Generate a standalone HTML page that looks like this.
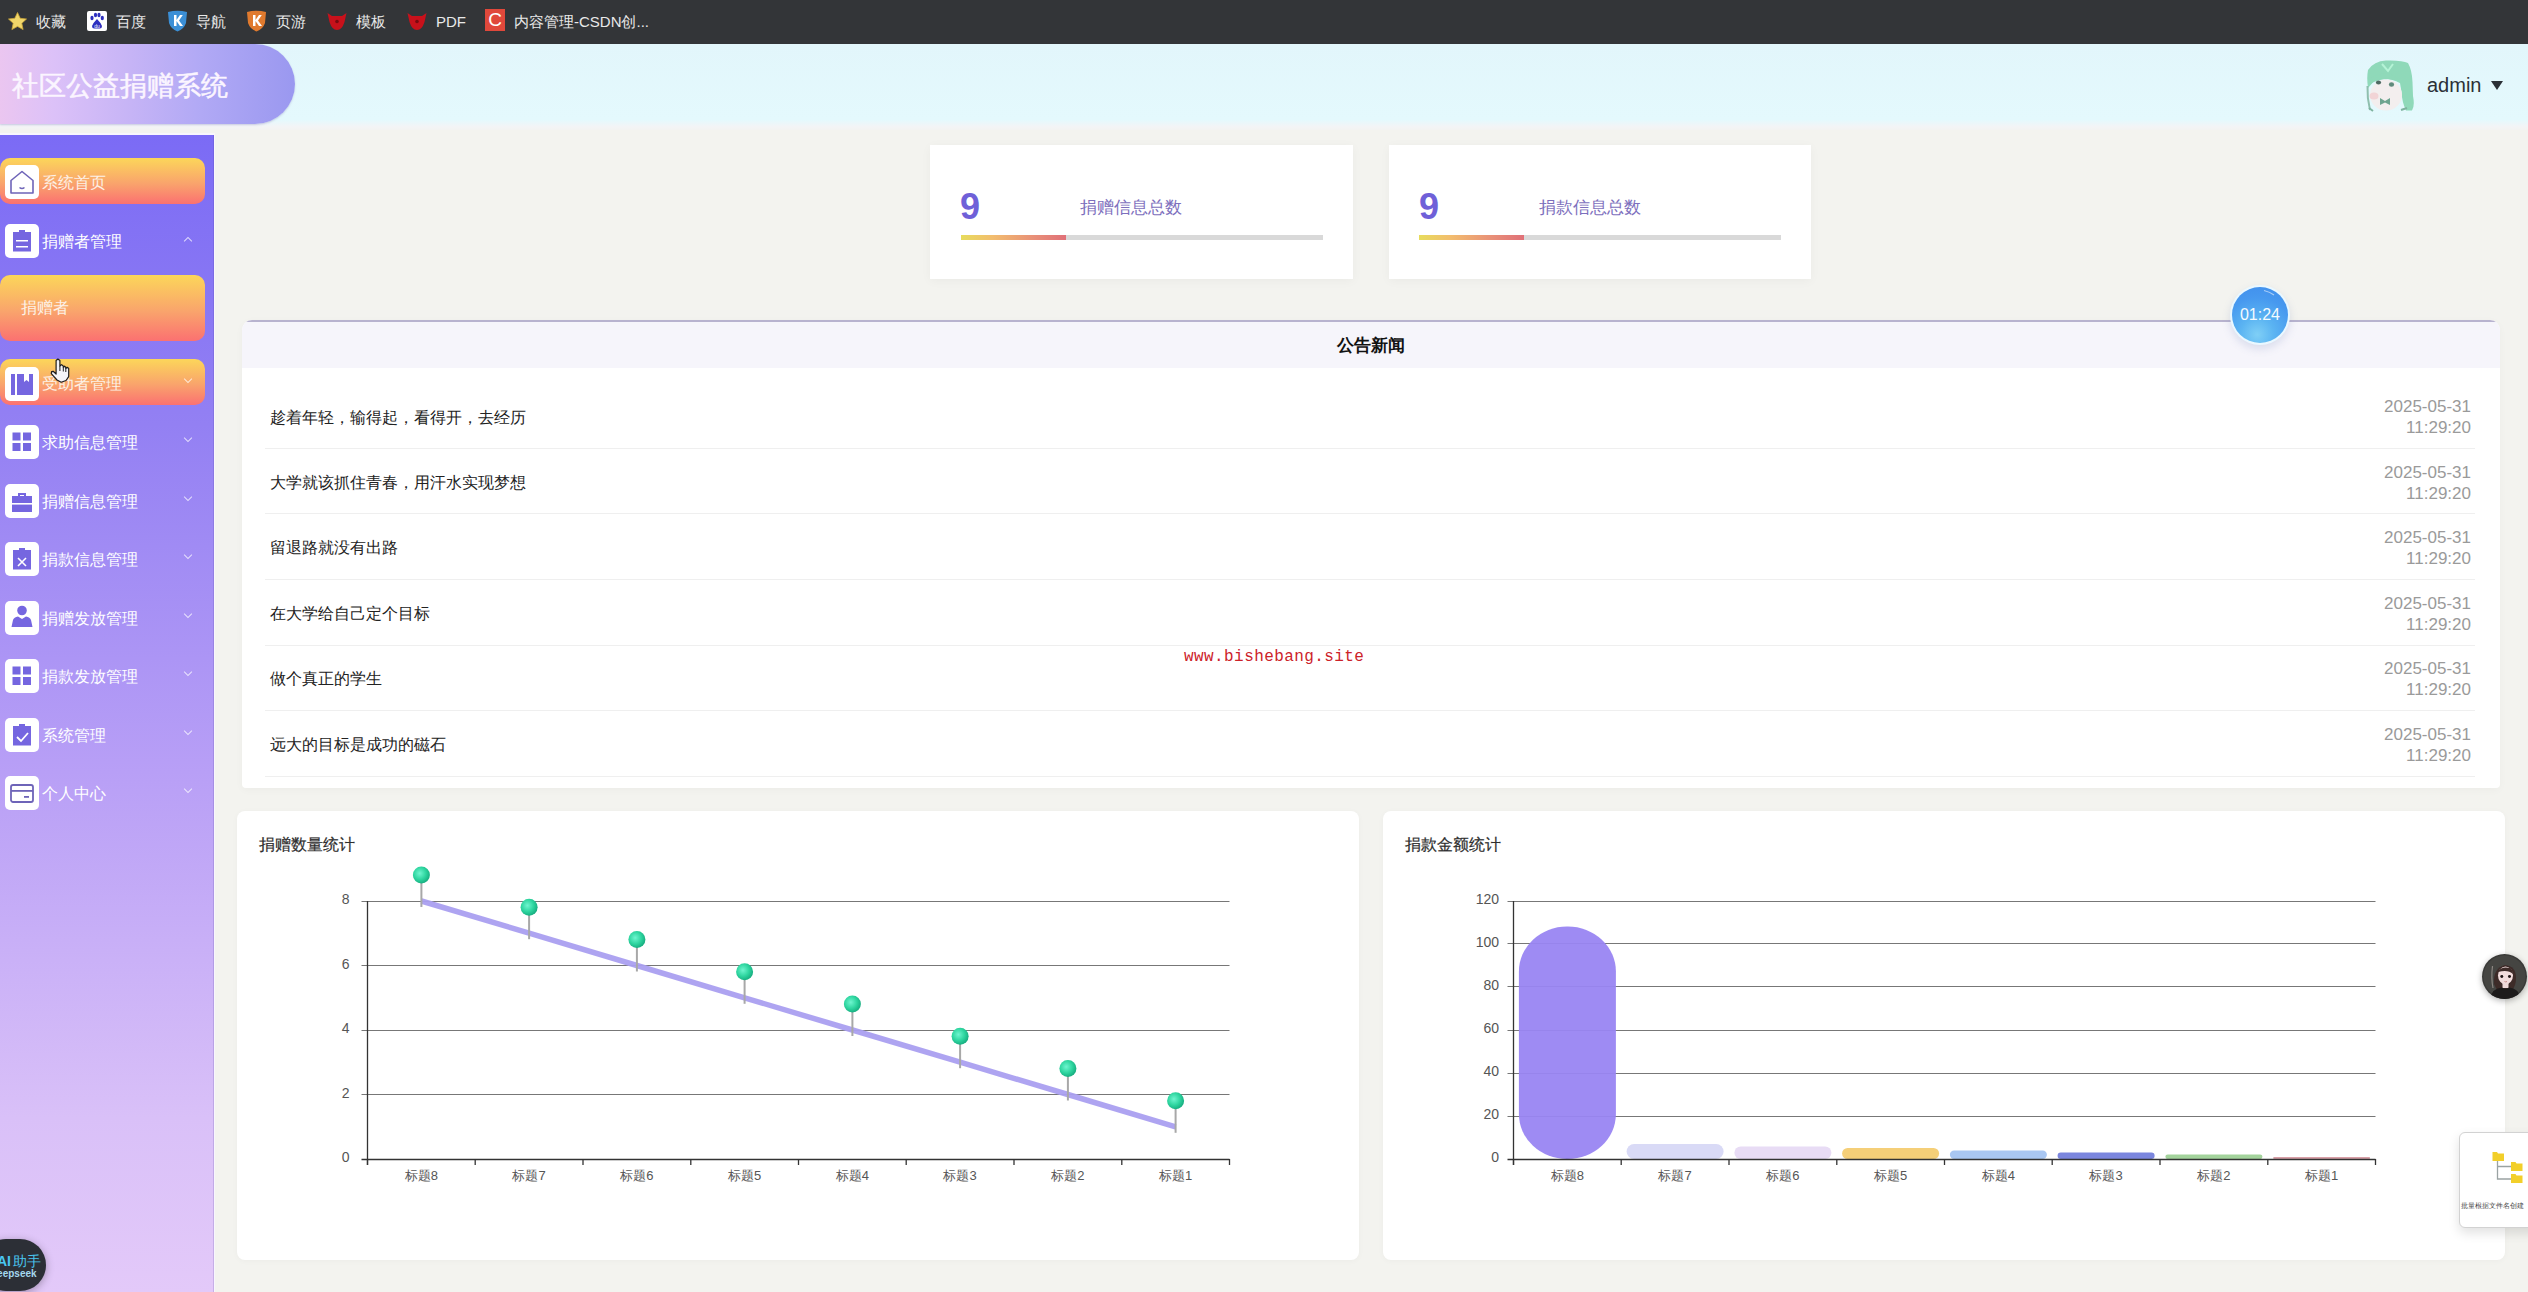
<!DOCTYPE html>
<html><head><meta charset="utf-8">
<style>
*{box-sizing:border-box;margin:0;padding:0}
html,body{width:2528px;height:1292px;overflow:hidden}
body{position:relative;background:#f3f3ef;font-family:"Liberation Sans",sans-serif;color:#333}
.abs{position:absolute}
/* bookmark bar */
#bm{left:0;top:0;width:2528px;height:44px;background:#333538}
.bmi{position:absolute;top:1px;height:44px;line-height:42px;font-size:15px;color:#e9e9e9;white-space:nowrap}
/* header */
#hd{left:0;top:44px;width:2528px;height:86px;background:linear-gradient(180deg,#e2f6fb 0%,#e4f9fd 88%,#f3f4f6 96%,#f3f3f1 100%)}
#logo{left:0;top:44px;width:295px;height:80px;border-radius:0 40px 40px 0;background:linear-gradient(90deg,#ebc6f0 0%,#dcc1f8 18%,#c8b5f6 42%,#b1a9f5 68%,#9a98f0 100%);box-shadow:0 1px 2px rgba(90,70,150,.25)}
#logo span{position:absolute;left:12px;top:24px;font-size:27px;color:#fbf5ff;-webkit-text-stroke:0.5px #fbf5ff;letter-spacing:0px;line-height:36px}
/* sidebar */
#sb{left:0;top:133px;width:215px;height:1159px;border-top:2px solid #f8f6fd;box-shadow:inset -1px 0 0 rgba(80,60,150,.18);background:linear-gradient(180deg,#7b6bf5 0%,#9380f3 25%,#b89ff6 55%,#d9c0f8 85%,#e3c9f9 100%);border-right:1px solid #f8f5fe}
.mi{position:absolute;left:0;width:205px;height:46px}
.mi.act{background:linear-gradient(180deg,#fcd65a 0%,#f9a46c 55%,#fb7171 100%);border-radius:10px}
.ico{position:absolute;left:5px;width:34px;height:34px;background:#fff;border-radius:5px}
.mt{position:absolute;left:42px;font-size:16px;color:#fff;line-height:20px;white-space:nowrap}
.chev{position:absolute;left:184.8px;width:6px;height:6px;border-right:1.7px solid rgba(255,255,255,.72);border-bottom:1.7px solid rgba(255,255,255,.72);transform:rotate(45deg)}

.card{position:absolute;background:#fff;box-shadow:0 2px 10px rgba(0,0,0,.04)}
.num{position:absolute;font-size:36px;font-weight:bold;color:#6f60d8;line-height:40px}
.clab{position:absolute;font-size:17px;color:#7d6fbd;line-height:20px;white-space:nowrap}
.bar{position:absolute;height:5px;background:#d9d9d9}
.bar i{position:absolute;left:0;top:0;height:5px;width:105px;background:linear-gradient(90deg,#e7dc5c 0%,#f2bd6e 30%,#e88f78 70%,#e07078 100%)}
#np{left:242px;top:320px;width:2258px;height:468px;box-shadow:0 2px 8px rgba(0,0,0,.03);background:#fff;border-radius:10px 10px 4px 4px;overflow:hidden}
#npb{position:absolute;left:0;top:0;width:100%;height:2px;background:#b8b3cf}
#nph{position:absolute;left:0;top:2px;width:100%;height:46px;background:#f6f5fb}
.nt{position:absolute;left:28px;font-size:16px;color:#222;line-height:22px;white-space:nowrap}
.nd{position:absolute;right:29px;font-size:17px;color:#9a9a9a;line-height:21px;text-align:right;white-space:nowrap}
.sep{position:absolute;left:23px;width:2210px;height:1px;background:#efefef}
.ccard{position:absolute;top:811px;width:1122px;height:449px;background:#fff;border-radius:8px;box-shadow:0 1px 6px rgba(0,0,0,.03)}
.ctitle{position:absolute;left:22px;top:24px;font-size:16px;font-weight:500;color:#2e2e2e;line-height:20px;-webkit-text-stroke:0.2px #2e2e2e}
</style></head>
<body>
<div id="bm" class="abs">
  
<svg class="abs" style="left:7px;top:11px" width="21" height="21" viewBox="0 0 21 21"><path d="M10.5 1.5 L13.2 7.3 L19.5 8 L14.8 12.3 L16.1 18.6 L10.5 15.4 L4.9 18.6 L6.2 12.3 L1.5 8 L7.8 7.3 Z" fill="#f0d66a" stroke="#c9a437" stroke-width=".8"/></svg>
<div class="abs" style="left:87px;top:11px;width:20px;height:20px;background:#fff;border-radius:2px">
<svg width="20" height="20" viewBox="0 0 20 20"><ellipse cx="5" cy="7" rx="1.6" ry="2.2" fill="#2d2fbf"/><ellipse cx="8.5" cy="4" rx="1.6" ry="2.2" fill="#2d2fbf"/><ellipse cx="12" cy="4" rx="1.6" ry="2.2" fill="#2d2fbf"/><ellipse cx="15.3" cy="7" rx="1.6" ry="2.2" fill="#2d2fbf"/><path d="M10 8 Q6 12 5 15 Q5 18 8 17.5 L12 17.5 Q15 18 15 15 Q14 12 10 8 Z" fill="#2d2fbf"/><text x="10" y="16.5" font-size="5" fill="#fff" text-anchor="middle" font-family="Liberation Sans">du</text></svg></div>
<svg class="abs" style="left:167px;top:10px" width="21" height="22" viewBox="0 0 21 22"><path d="M1 2 Q10.5 -0.5 20 2 L19 13 Q17 19 10.5 21.5 Q4 19 2 13 Z" fill="#3b8fd6"/><path d="M7 5 L9.5 5 L9.5 10 L13 5 L15.8 5 L12 10.5 L16 16 L13 16 L9.5 11 L9.5 16 L7 16 Z" fill="#fff"/></svg>
<svg class="abs" style="left:246px;top:10px" width="21" height="22" viewBox="0 0 21 22"><path d="M1 2 Q10.5 -0.5 20 2 L19 13 Q17 19 10.5 21.5 Q4 19 2 13 Z" fill="#e07a2e"/><path d="M7 5 L9.5 5 L9.5 10 L13 5 L15.8 5 L12 10.5 L16 16 L13 16 L9.5 11 L9.5 16 L7 16 Z" fill="#fff"/></svg>
<svg class="abs" style="left:327px;top:12px" width="20" height="19" viewBox="0 0 20 19"><path d="M0.5 1 L5 4 L15 4 L19.5 1 L17.5 10 Q15 18 10 18 Q5 18 2.5 10 Z" fill="#c8111b"/><circle cx="10" cy="9.5" r="1.8" fill="#7a0a10"/></svg>
<svg class="abs" style="left:407px;top:12px" width="20" height="19" viewBox="0 0 20 19"><path d="M0.5 1 L5 4 L15 4 L19.5 1 L17.5 10 Q15 18 10 18 Q5 18 2.5 10 Z" fill="#c8111b"/><circle cx="10" cy="9.5" r="1.8" fill="#7a0a10"/></svg>
<div class="abs" style="left:485px;top:9px;width:20px;height:22px;background:#e0483b;color:#fff;font-size:19px;line-height:22px;text-align:center;font-family:'Liberation Sans',sans-serif">C</div>
<div class="bmi" style="left:36px">收藏</div>
  <div class="bmi" style="left:116px">百度</div>
  <div class="bmi" style="left:196px">导航</div>
  <div class="bmi" style="left:276px">页游</div>
  <div class="bmi" style="left:356px">模板</div>
  <div class="bmi" style="left:436px">PDF</div>
  <div class="bmi" style="left:514px">内容管理-CSDN创...</div>
</div>
<div id="hd" class="abs"></div>
<div id="logo" class="abs"><span>社区公益捐赠系统</span></div>
<svg class="abs" style="left:2355px;top:52px;filter:blur(0.4px)" width="70" height="70" viewBox="0 0 70 70">
<path d="M13 18 Q19 9 31 8.5 Q47 8 53 11 Q57 18 57.5 30 L58 44 Q60 54 57 58.5 L51 58.5 Q47 50 46.5 40 L45 31 Q34 25 20 28 L13 36 Q11.5 26 13 18 Z" fill="#8fd9b9"/>
<path d="M27 12 L33 19 L38 12" stroke="#b5f3d6" stroke-width="2" fill="none"/>
<ellipse cx="31" cy="43" rx="16" ry="15.5" fill="#f3eeee"/>
<path d="M15 26 Q24 21 33 22 Q41 23 45 31 Q40 27 33 27 Q24 27 15 32 Z" fill="#8fd9b9"/>
<path d="M12.5 34 Q12 46 15 58" stroke="#8fbfae" stroke-width="2" fill="none"/>
<ellipse cx="23.5" cy="30.5" rx="2.6" ry="2" fill="#4f6a62"/>
<ellipse cx="36.5" cy="32.5" rx="2.6" ry="2.2" fill="#5f8b7c"/>
<ellipse cx="19" cy="44" rx="4.5" ry="3.5" fill="#f2d4d6"/>
<path d="M25 46 L30 49 L35 46 L35 53 L30 50.5 L25 53 Z" fill="#6ea48f"/>
<path d="M14 56 L18 59 M46 58 L52 56" stroke="#7fb3a0" stroke-width="2"/>
</svg>
<div class="abs" style="left:2427px;top:74px;font-size:20px;color:#2b3036">admin</div>
<div class="abs" style="left:2491px;top:81px;width:0;height:0;border-left:6px solid transparent;border-right:6px solid transparent;border-top:9px solid #2b3036"></div>

<div id="sb" class="abs"></div>
<div class="mi act" style="top:158px"><div class="ico" style="top:7px"><svg width="34" height="34" viewBox="0 0 34 34"><path d="M17 6.5 L28 15.5 L28 28 L6 28 L6 15.5 Z" fill="none" stroke="#6e64b8" stroke-width="1.6" stroke-linejoin="round"/><path d="M14.5 22.5 Q17 24.5 19.5 22.5" fill="none" stroke="#6e64b8" stroke-width="1.6"/></svg></div><div class="mt" style="top:15px;color:#fdf1e6">系统首页</div></div>
<div class="mi" style="top:218px"><div class="ico" style="top:6px"><svg width="34" height="34" viewBox="0 0 34 34"><rect x="8" y="8" width="18" height="19.5" fill="#7566e0"/><rect x="14" y="6" width="6" height="3" fill="#7566e0"/><rect x="11" y="16" width="12" height="1.5" fill="#fff"/><rect x="11" y="22" width="12" height="1.5" fill="#fff"/></svg></div><div class="mt" style="top:14px">捐赠者管理</div><div class="chev" style="top:20px;transform:rotate(-135deg)"></div></div>
<div class="mi act" style="top:275px;height:66px"><div class="mt" style="left:21px;top:23px;color:#fdf1e6">捐赠者</div></div>
<div class="mi act" style="top:359px"><div class="ico" style="top:8px"><svg width="34" height="34" viewBox="0 0 34 34"><rect x="6" y="7" width="4" height="21" fill="#7566e0"/><path d="M12 7 L28 7 L28 28 L12 28 Z M19 7 L19 15 L21.5 13 L24 15 L24 7 Z" fill="#7566e0" fill-rule="evenodd"/></svg></div><div class="mt" style="top:15px;color:#fdf1e6">受助者管理</div><div class="chev" style="top:17px"></div></div>
<div class="mi" style="top:418px"><div class="ico" style="top:7px"><svg width="34" height="34" viewBox="0 0 34 34"><rect x="7.5" y="7.5" width="8" height="8" fill="#7566e0"/><rect x="18" y="7.5" width="8" height="8" fill="#7566e0"/><rect x="7.5" y="18" width="8" height="8" fill="#7566e0"/><rect x="18" y="18" width="8" height="8" fill="#7566e0"/></svg></div><div class="mt" style="top:15px">求助信息管理</div><div class="chev" style="top:17px"></div></div>
<div class="mi" style="top:477px"><div class="ico" style="top:7px"><svg width="34" height="34" viewBox="0 0 34 34"><path d="M13 9 L21 9 L21 12 L19 12 L19 11 L15 11 L15 12 L13 12 Z" fill="#7566e0"/><rect x="7" y="12" width="20" height="16" fill="#7566e0"/><rect x="7" y="19" width="20" height="1.6" fill="#fff"/></svg></div><div class="mt" style="top:15px">捐赠信息管理</div><div class="chev" style="top:17px"></div></div>
<div class="mi" style="top:535px"><div class="ico" style="top:7px"><svg width="34" height="34" viewBox="0 0 34 34"><rect x="8" y="8" width="18" height="19.5" fill="#7566e0"/><rect x="14" y="6" width="6" height="3" fill="#7566e0"/><path d="M13 16 L21 24 M21 16 L13 24" stroke="#fff" stroke-width="1.6"/></svg></div><div class="mt" style="top:15px">捐款信息管理</div><div class="chev" style="top:17px"></div></div>
<div class="mi" style="top:594px"><div class="ico" style="top:7px"><svg width="34" height="34" viewBox="0 0 34 34"><circle cx="17" cy="9.5" r="4.8" fill="#7566e0"/><path d="M6.5 26 L8 19 Q9 16 13 15.5 L17 18 L21 15.5 Q25 16 26 19 L27.5 26 Z" fill="#7566e0"/></svg></div><div class="mt" style="top:15px">捐赠发放管理</div><div class="chev" style="top:17px"></div></div>
<div class="mi" style="top:652px"><div class="ico" style="top:7px"><svg width="34" height="34" viewBox="0 0 34 34"><rect x="7.5" y="7.5" width="8" height="8" fill="#7566e0"/><rect x="18" y="7.5" width="8" height="8" fill="#7566e0"/><rect x="7.5" y="18" width="8" height="8" fill="#7566e0"/><rect x="18" y="18" width="8" height="8" fill="#7566e0"/></svg></div><div class="mt" style="top:15px">捐款发放管理</div><div class="chev" style="top:17px"></div></div>
<div class="mi" style="top:711px"><div class="ico" style="top:7px"><svg width="34" height="34" viewBox="0 0 34 34"><rect x="8" y="8" width="18" height="19.5" fill="#7566e0"/><rect x="14" y="6" width="6" height="3" fill="#7566e0"/><path d="M12 19 L16 23 L23 15" fill="none" stroke="#fff" stroke-width="1.8"/></svg></div><div class="mt" style="top:15px">系统管理</div><div class="chev" style="top:17px"></div></div>
<div class="mi" style="top:769px"><div class="ico" style="top:7px"><svg width="34" height="34" viewBox="0 0 34 34"><rect x="6" y="9" width="22" height="17" rx="2" fill="none" stroke="#6e64b8" stroke-width="1.8"/><rect x="6" y="14" width="22" height="1.8" fill="#6e64b8"/><rect x="19" y="20" width="5" height="1.8" fill="#6e64b8"/></svg></div><div class="mt" style="top:15px">个人中心</div><div class="chev" style="top:17px"></div></div>


<!-- MAIN -->
<div class="card" style="left:930px;top:145px;width:423px;height:134px">
  <div class="num" style="left:30px;top:42px">9</div>
  <div class="clab" style="left:150px;top:53px">捐赠信息总数</div>
  <div class="bar" style="left:31px;top:90px;width:362px"><i></i></div>
</div>
<div class="card" style="left:1389px;top:145px;width:422px;height:134px">
  <div class="num" style="left:30px;top:42px">9</div>
  <div class="clab" style="left:150px;top:53px">捐款信息总数</div>
  <div class="bar" style="left:30px;top:90px;width:362px"><i></i></div>
</div>
<div id="np" class="abs">
  <div id="npb"></div><div id="nph"><div style="position:absolute;left:0;width:100%;top:14px;text-align:center;font-size:17px;font-weight:bold;color:#111;line-height:20px">公告新闻</div></div>
  <div class="nt" style="top:86.5px">趁着年轻，输得起，看得开，去经历</div><div class="nd" style="top:76.0px">2025-05-31<br>11:29:20</div><div class="sep" style="top:127.8px"></div>
<div class="nt" style="top:151.9px">大学就该抓住青春，用汗水实现梦想</div><div class="nd" style="top:141.5px">2025-05-31<br>11:29:20</div><div class="sep" style="top:193.4px"></div>
<div class="nt" style="top:217.3px">留退路就没有出路</div><div class="nd" style="top:207.0px">2025-05-31<br>11:29:20</div><div class="sep" style="top:259.0px"></div>
<div class="nt" style="top:282.7px">在大学给自己定个目标</div><div class="nd" style="top:272.5px">2025-05-31<br>11:29:20</div><div class="sep" style="top:324.6px"></div>
<div class="nt" style="top:348.1px">做个真正的学生</div><div class="nd" style="top:338.0px">2025-05-31<br>11:29:20</div><div class="sep" style="top:390.2px"></div>
<div class="nt" style="top:413.5px">远大的目标是成功的磁石</div><div class="nd" style="top:403.5px">2025-05-31<br>11:29:20</div><div class="sep" style="top:455.8px"></div>
</div>
<div class="ccard" style="left:237px"><div class="ctitle">捐赠数量统计</div></div>
<div class="ccard" style="left:1383px"><div class="ctitle">捐款金额统计</div></div>
<svg class="abs" style="left:0;top:0" width="2528" height="1292" viewBox="0 0 2528 1292">
<defs><radialGradient id="ball" cx="40%" cy="40%" r="65%"><stop offset="0%" stop-color="#6ff5cf"/><stop offset="55%" stop-color="#2fd6a0"/><stop offset="100%" stop-color="#14a97c"/></radialGradient></defs>
<style>.yl{font-family:"Liberation Sans",sans-serif;font-size:14px;fill:#555}.xl{font-family:"Liberation Sans",sans-serif;font-size:13px;fill:#555}</style>
<line x1="361.5" y1="901.5" x2="1229.5" y2="901.5" stroke="#777" stroke-width="1"/>
<text x="349.5" y="904.0" text-anchor="end" class="yl">8</text>
<line x1="361.5" y1="965.5" x2="1229.5" y2="965.5" stroke="#777" stroke-width="1"/>
<text x="349.5" y="968.5" text-anchor="end" class="yl">6</text>
<line x1="361.5" y1="1030.5" x2="1229.5" y2="1030.5" stroke="#777" stroke-width="1"/>
<text x="349.5" y="1033.0" text-anchor="end" class="yl">4</text>
<line x1="361.5" y1="1094.5" x2="1229.5" y2="1094.5" stroke="#777" stroke-width="1"/>
<text x="349.5" y="1097.5" text-anchor="end" class="yl">2</text>
<text x="349.5" y="1162.0" text-anchor="end" class="yl">0</text>
<line x1="367.5" y1="901" x2="367.5" y2="1165" stroke="#333" stroke-width="1.3"/>
<line x1="361.5" y1="1159.5" x2="1229.5" y2="1159.5" stroke="#333" stroke-width="1.6"/>
<line x1="367.5" y1="1159" x2="367.5" y2="1165" stroke="#333" stroke-width="1.3"/>
<line x1="475.2" y1="1159" x2="475.2" y2="1165" stroke="#333" stroke-width="1.3"/>
<line x1="583.0" y1="1159" x2="583.0" y2="1165" stroke="#333" stroke-width="1.3"/>
<line x1="690.8" y1="1159" x2="690.8" y2="1165" stroke="#333" stroke-width="1.3"/>
<line x1="798.5" y1="1159" x2="798.5" y2="1165" stroke="#333" stroke-width="1.3"/>
<line x1="906.2" y1="1159" x2="906.2" y2="1165" stroke="#333" stroke-width="1.3"/>
<line x1="1014.0" y1="1159" x2="1014.0" y2="1165" stroke="#333" stroke-width="1.3"/>
<line x1="1121.8" y1="1159" x2="1121.8" y2="1165" stroke="#333" stroke-width="1.3"/>
<line x1="1229.5" y1="1159" x2="1229.5" y2="1165" stroke="#333" stroke-width="1.3"/>
<text x="421.4" y="1179.5" text-anchor="middle" class="xl">标题8</text>
<text x="529.1" y="1179.5" text-anchor="middle" class="xl">标题7</text>
<text x="636.9" y="1179.5" text-anchor="middle" class="xl">标题6</text>
<text x="744.6" y="1179.5" text-anchor="middle" class="xl">标题5</text>
<text x="852.4" y="1179.5" text-anchor="middle" class="xl">标题4</text>
<text x="960.1" y="1179.5" text-anchor="middle" class="xl">标题3</text>
<text x="1067.9" y="1179.5" text-anchor="middle" class="xl">标题2</text>
<text x="1175.6" y="1179.5" text-anchor="middle" class="xl">标题1</text>
<polyline points="421.4,901.0 529.1,933.2 636.9,965.5 744.6,997.8 852.4,1030.0 960.1,1062.2 1067.9,1094.5 1175.6,1126.8" fill="none" stroke="#aa9ff0" stroke-width="5.5" stroke-opacity=".95"/>
<line x1="421.4" y1="881.0" x2="421.4" y2="907.0" stroke="#a8a8a8" stroke-width="2"/>
<circle cx="421.4" cy="875.0" r="8.5" fill="url(#ball)"/>
<line x1="529.1" y1="913.2" x2="529.1" y2="939.2" stroke="#a8a8a8" stroke-width="2"/>
<circle cx="529.1" cy="907.2" r="8.5" fill="url(#ball)"/>
<line x1="636.9" y1="945.5" x2="636.9" y2="971.5" stroke="#a8a8a8" stroke-width="2"/>
<circle cx="636.9" cy="939.5" r="8.5" fill="url(#ball)"/>
<line x1="744.6" y1="977.8" x2="744.6" y2="1003.8" stroke="#a8a8a8" stroke-width="2"/>
<circle cx="744.6" cy="971.8" r="8.5" fill="url(#ball)"/>
<line x1="852.4" y1="1010.0" x2="852.4" y2="1036.0" stroke="#a8a8a8" stroke-width="2"/>
<circle cx="852.4" cy="1004.0" r="8.5" fill="url(#ball)"/>
<line x1="960.1" y1="1042.2" x2="960.1" y2="1068.2" stroke="#a8a8a8" stroke-width="2"/>
<circle cx="960.1" cy="1036.2" r="8.5" fill="url(#ball)"/>
<line x1="1067.9" y1="1074.5" x2="1067.9" y2="1100.5" stroke="#a8a8a8" stroke-width="2"/>
<circle cx="1067.9" cy="1068.5" r="8.5" fill="url(#ball)"/>
<line x1="1175.6" y1="1106.8" x2="1175.6" y2="1132.8" stroke="#a8a8a8" stroke-width="2"/>
<circle cx="1175.6" cy="1100.8" r="8.5" fill="url(#ball)"/>
<line x1="1507.5" y1="901.5" x2="2375.5" y2="901.5" stroke="#777" stroke-width="1"/>
<text x="1499" y="904.0" text-anchor="end" class="yl">120</text>
<line x1="1507.5" y1="943.5" x2="2375.5" y2="943.5" stroke="#777" stroke-width="1"/>
<text x="1499" y="947.0" text-anchor="end" class="yl">100</text>
<line x1="1507.5" y1="986.5" x2="2375.5" y2="986.5" stroke="#777" stroke-width="1"/>
<text x="1499" y="990.0" text-anchor="end" class="yl">80</text>
<line x1="1507.5" y1="1030.5" x2="2375.5" y2="1030.5" stroke="#777" stroke-width="1"/>
<text x="1499" y="1033.0" text-anchor="end" class="yl">60</text>
<line x1="1507.5" y1="1073.5" x2="2375.5" y2="1073.5" stroke="#777" stroke-width="1"/>
<text x="1499" y="1076.0" text-anchor="end" class="yl">40</text>
<line x1="1507.5" y1="1116.5" x2="2375.5" y2="1116.5" stroke="#777" stroke-width="1"/>
<text x="1499" y="1119.0" text-anchor="end" class="yl">20</text>
<text x="1499" y="1162.0" text-anchor="end" class="yl">0</text>
<line x1="1513.5" y1="901" x2="1513.5" y2="1165" stroke="#333" stroke-width="1.3"/>
<rect x="1518.9" y="926.5" width="97" height="232.5" rx="48" ry="45" fill="#9985f2" fill-opacity=".95"/>
<text x="1567.4" y="1179.5" text-anchor="middle" class="xl">标题8</text>
<rect x="1626.6" y="1144" width="97" height="15" rx="7.5" ry="7.5" fill="#d9daf6"/>
<text x="1675.1" y="1179.5" text-anchor="middle" class="xl">标题7</text>
<rect x="1734.4" y="1146.5" width="97" height="12.5" rx="6.2" ry="6.2" fill="#e8dcf5"/>
<text x="1782.9" y="1179.5" text-anchor="middle" class="xl">标题6</text>
<rect x="1842.1" y="1148" width="97" height="11" rx="5.5" ry="5.5" fill="#f5cf78"/>
<text x="1890.6" y="1179.5" text-anchor="middle" class="xl">标题5</text>
<rect x="1949.9" y="1150.5" width="97" height="8.5" rx="4.2" ry="4.2" fill="#a9c7f2"/>
<text x="1998.4" y="1179.5" text-anchor="middle" class="xl">标题4</text>
<rect x="2057.6" y="1152.5" width="97" height="6.5" rx="3.2" ry="3.2" fill="#7b86de"/>
<text x="2106.1" y="1179.5" text-anchor="middle" class="xl">标题3</text>
<rect x="2165.4" y="1154.5" width="97" height="4.5" rx="2.2" ry="2.2" fill="#a3d39c"/>
<text x="2213.9" y="1179.5" text-anchor="middle" class="xl">标题2</text>
<rect x="2273.1" y="1157" width="97" height="2" rx="1.0" ry="1.0" fill="#d9a0a8"/>
<text x="2321.6" y="1179.5" text-anchor="middle" class="xl">标题1</text>
<line x1="1507.5" y1="1159.5" x2="2375.5" y2="1159.5" stroke="#333" stroke-width="1.6"/>
<line x1="1513.5" y1="1159" x2="1513.5" y2="1165" stroke="#333" stroke-width="1.3"/>
<line x1="1621.2" y1="1159" x2="1621.2" y2="1165" stroke="#333" stroke-width="1.3"/>
<line x1="1729.0" y1="1159" x2="1729.0" y2="1165" stroke="#333" stroke-width="1.3"/>
<line x1="1836.8" y1="1159" x2="1836.8" y2="1165" stroke="#333" stroke-width="1.3"/>
<line x1="1944.5" y1="1159" x2="1944.5" y2="1165" stroke="#333" stroke-width="1.3"/>
<line x1="2052.2" y1="1159" x2="2052.2" y2="1165" stroke="#333" stroke-width="1.3"/>
<line x1="2160.0" y1="1159" x2="2160.0" y2="1165" stroke="#333" stroke-width="1.3"/>
<line x1="2267.8" y1="1159" x2="2267.8" y2="1165" stroke="#333" stroke-width="1.3"/>
<line x1="2375.5" y1="1159" x2="2375.5" y2="1165" stroke="#333" stroke-width="1.3"/>
</svg>
<!-- OVERLAY -->
<!-- timer -->
<div class="abs" style="left:2230px;top:285px;width:60px;height:60px;border-radius:50%;background:#eaf8ff;box-shadow:0 4px 8px rgba(90,110,170,.18)"></div>
<div class="abs" style="left:2232px;top:287px;width:56px;height:56px;border-radius:50%;background:radial-gradient(circle at 45% 85%,#7fcff6 0%,#5bb4f2 30%,#4799ef 65%,#3f8cec 100%)"></div>
<svg class="abs" style="left:2232px;top:287px" width="56" height="56" viewBox="0 0 56 56"><path d="M32 3.5 Q38 5 42 8" stroke="rgba(255,255,255,.55)" stroke-width="1.2" fill="none"/></svg>
<div class="abs" style="left:2232px;top:305px;width:56px;text-align:center;font-size:16px;color:#f3fbff;line-height:20px">01:24</div>
<!-- watermark -->
<div class="abs" style="left:1184px;top:647px;font-family:'Liberation Mono',monospace;font-size:16px;color:#cc2229;line-height:20px;letter-spacing:0.42px">www.bishebang.site</div>
<!-- girl avatar -->
<div class="abs" style="left:2482px;top:954px;width:45px;height:45px;border-radius:50%;background:#3a3a38;box-shadow:0 2px 6px rgba(0,0,0,.3);overflow:hidden">
 <svg width="45" height="45" viewBox="0 0 45 45"><circle cx="22.5" cy="22.5" r="21" fill="#454542"/><path d="M12 30 Q11 14 23 11 Q34 12 34 24 Q34 32 30 36 L15 36 Z" fill="#3d2b28"/><path d="M10.5 12 Q9 24 11 34" stroke="#8a8580" stroke-width="1.2" fill="none"/><ellipse cx="23.5" cy="21.5" rx="7.5" ry="9" fill="#f1dcdc"/><path d="M16 17 Q20 12 28 14 Q31 16 31 20 Q26 15 16 18 Z" fill="#3d2b28"/><ellipse cx="19.8" cy="22.5" rx="1.5" ry="1.4" fill="#1e1414"/><ellipse cx="27.5" cy="22.5" rx="1.5" ry="1.4" fill="#1e1414"/><path d="M22.5 27.5 Q23.7 28.3 25 27.5" stroke="#c68a8a" stroke-width="1" fill="none"/><rect x="20.5" y="29" width="6" height="5" fill="#efdada"/><path d="M8 45 Q10 34 20 33.5 Q23.5 36 27 33.5 Q37 34 38 45 Z" fill="#1d1b1b"/></svg>
</div>
<!-- file card -->
<div class="abs" style="left:2459px;top:1132px;width:80px;height:96px;background:#fff;border:1px solid #d2d2d2;border-radius:6px;box-shadow:0 5px 12px rgba(0,0,0,.12)">
 <svg style="position:absolute;left:30px;top:17px" width="36" height="36" viewBox="0 0 36 36"><path d="M7.5 10 L7.5 29 L21 29 M7.5 16.5 L21 16.5" stroke="#9aa3a3" stroke-width="1.3" fill="none"/><path d="M2.5 2 L7 2 L8 3.5 L14 3.5 L14 11 L2.5 11 Z" fill="#f2cf2a"/><path d="M21 12 L25.5 12 L26.5 13.5 L32.5 13.5 L32.5 21 L21 21 Z" fill="#f2cf2a"/><path d="M21 24 L25.5 24 L26.5 25.5 L32.5 25.5 L32.5 33 L21 33 Z" fill="#f2cf2a"/></svg>
 <div style="position:absolute;left:1px;top:68px;font-size:7px;color:#444;white-space:nowrap">批量根据文件名创建</div>
</div>
<!-- AI helper -->
<div class="abs" style="left:-20px;top:1239px;width:66px;height:52px;border-radius:26px;background:#2c2f36;box-shadow:0 2px 8px rgba(0,0,0,.3)"></div>
<div class="abs" style="left:-3px;top:1253px;font-size:14px;font-weight:bold;color:#49c6f0;line-height:16px;white-space:nowrap">AI<span style="font-weight:normal;margin-left:2px">助手</span></div>
<div class="abs" style="left:-9px;top:1268px;font-size:10px;font-weight:bold;color:#a5d8ee;line-height:12px;white-space:nowrap">deepseek</div>
<!-- cursor -->
<svg class="abs" style="left:48px;top:355px" width="24" height="30" viewBox="0 0 24 30"><path d="M8.1 5.5 L9.9 4.0 L11.9 5.5 L11.9 11.0 L13.6 9.6 L15.2 11.0 L15.3 12.3 L16.5 11.2 L17.7 12.3 L17.8 13.5 L19.2 12.3 L20.7 13.5 L20.7 21.6 L18.0 25.5 L13.2 27.2 L9.0 25.0 L3.3 18.6 L3.6 16.6 L5.2 16.3 L8.1 19.0 Z" fill="#f4f4f8" stroke="#1e1e1e" stroke-width="1.2" stroke-linejoin="round"/><path d="M11.9 11.0 L11.9 16.0 M15.3 12.3 L15.3 16.5 M17.8 13.5 L17.8 17.0" stroke="#1e1e1e" stroke-width="1"/></svg>


</body></html>
